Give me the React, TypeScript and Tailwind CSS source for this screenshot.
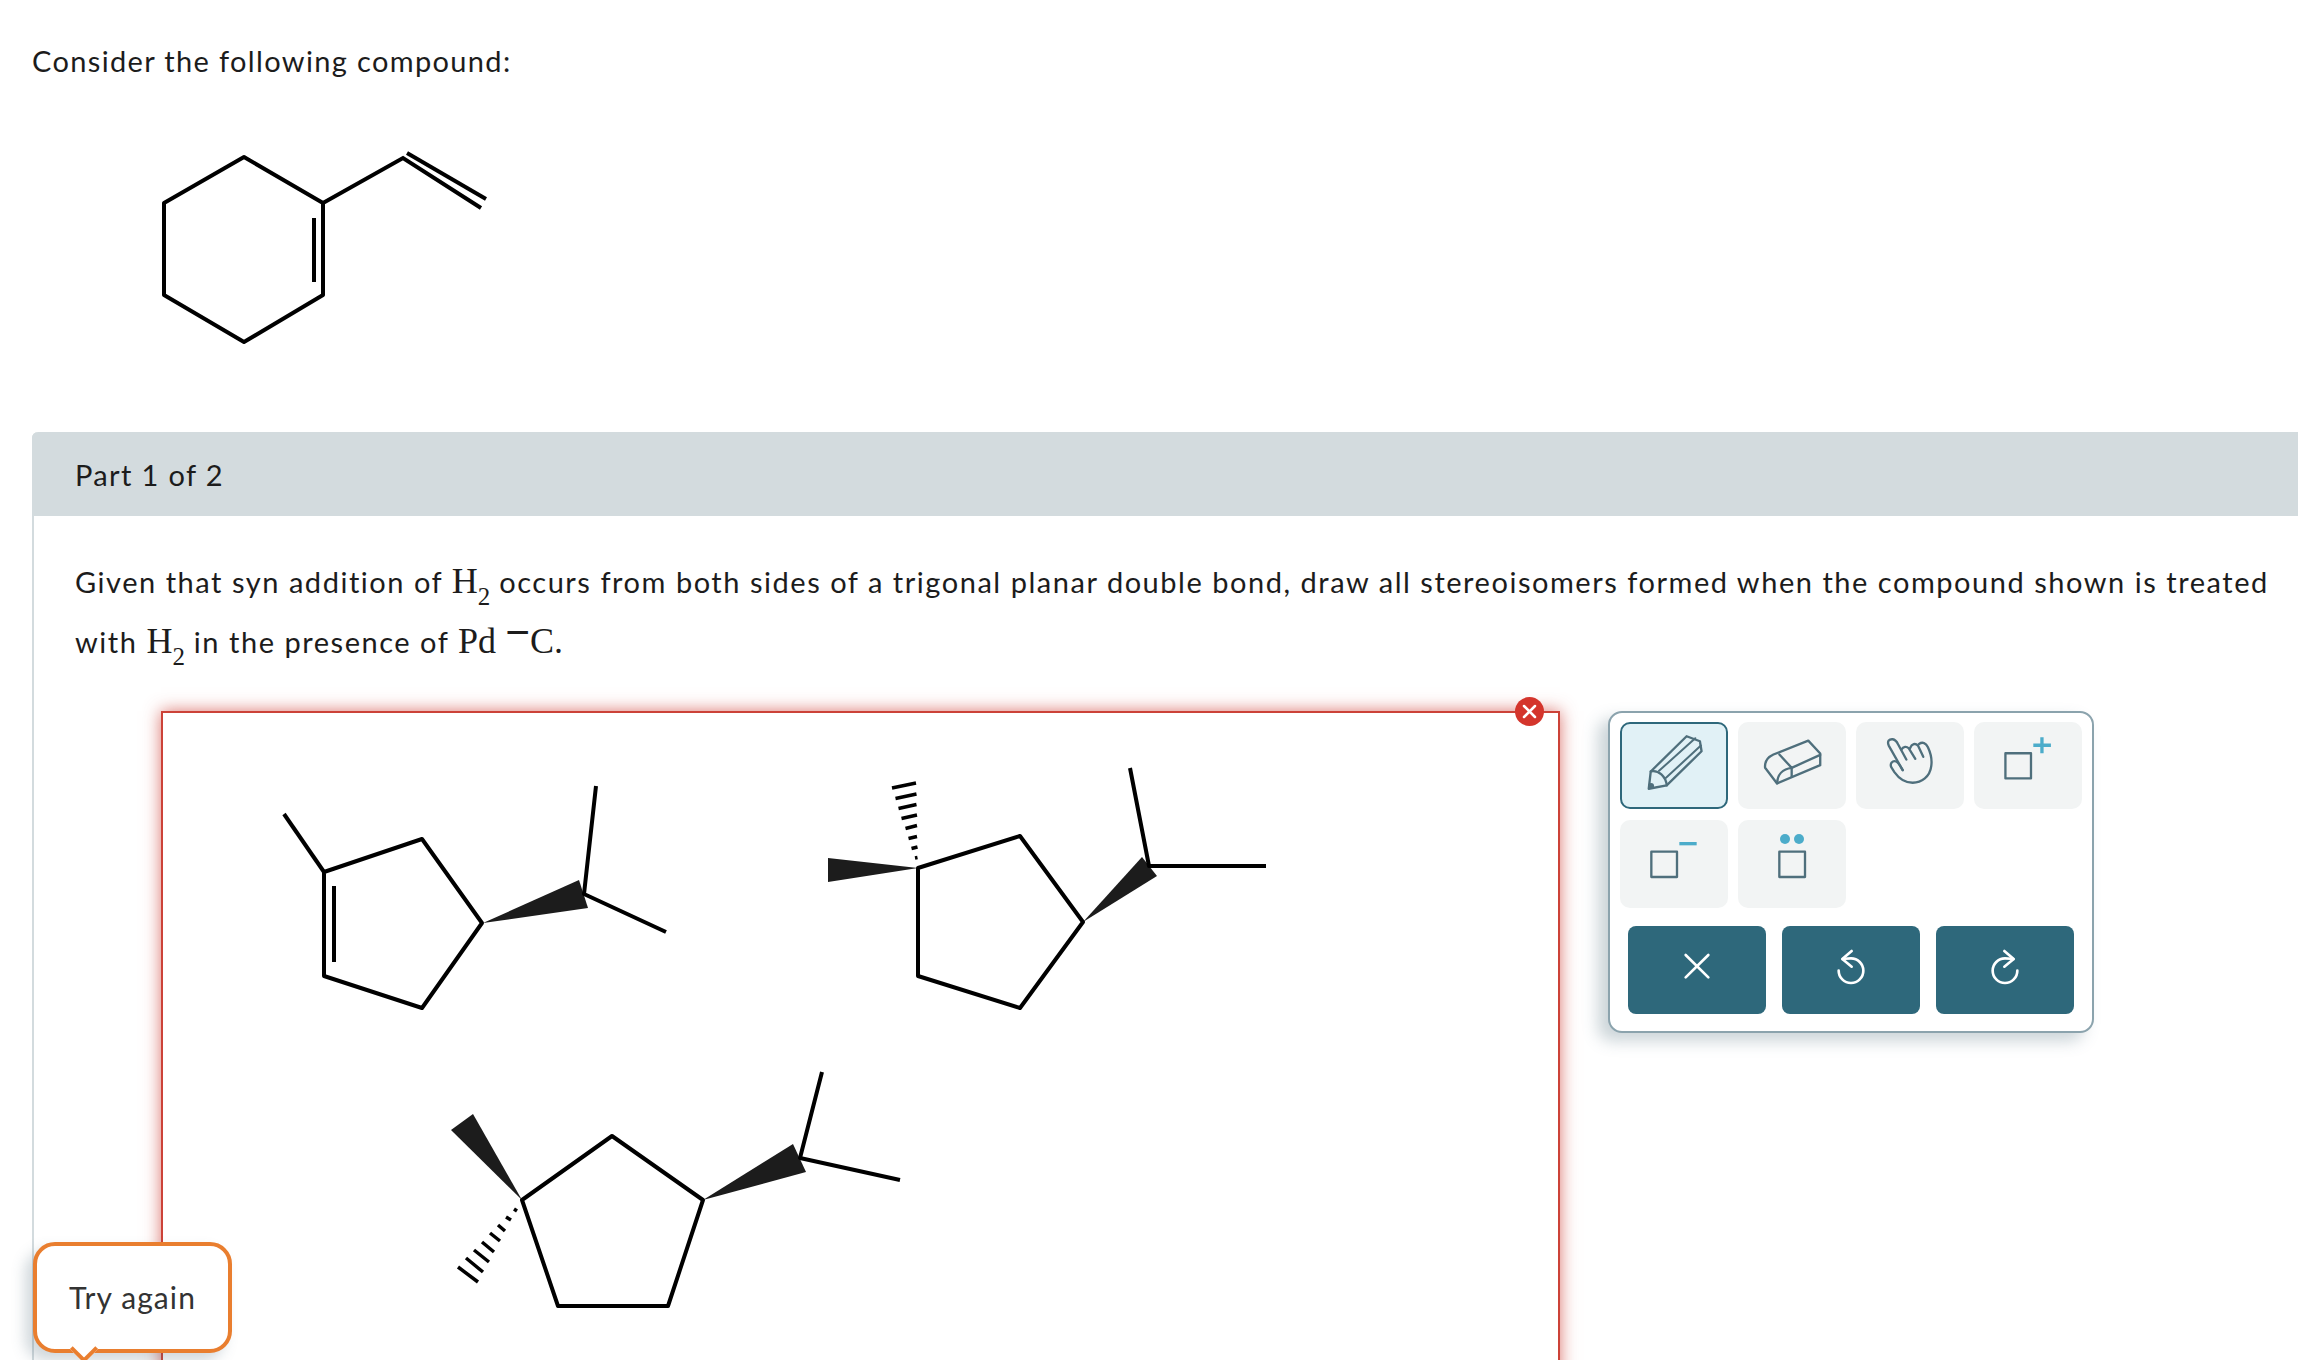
const serif = "font-['Liberation_Serif',serif]";

function Compound() {
  return (
    <svg width="380" height="230" viewBox="130 130 380 230" className="block" fill="none" stroke="#000" strokeWidth="4">
      <path d="M244 157L323 203V295L244 342L164 295V203Z" strokeLinejoin="round" />
      <path d="M314 218V282" />
      <path d="M323 203L403 158L481 208" />
      <path d="M407 153L486 199" />
    </svg>
  );
}

function Molecules() {
  return (
    <svg width="1395" height="660" viewBox="163 713 1395 660" className="block" fill="none" stroke="#000" strokeWidth="4" strokeLinejoin="round">
      <path d="M284 814L324 872" />
      <path d="M324 872L422 839L482 923L422 1008L324 976Z" />
      <path d="M334 886V962" />
      <path d="M483 923L579 880L588 908Z" fill="#1c1c1c" stroke="none" />
      <path d="M596 786L584 894L666 932" />

      <path d="M918 868L1020 836L1083 922L1020 1008L918 976Z" />
      <path d="M918 868L828 858V882Z" fill="#1c1c1c" stroke="none" />
      <path strokeWidth="3.500" d="M892 788L916 783M895.500 798.500L916.500 794M898.500 808.500L916.500 804.500M901.500 818.500L917 815M905.500 828.500L917 825.500M908.500 838.500L917 836.500M911.500 848.500L917.500 847M915 858L917.500 857.500" />
      <path d="M1083 922L1142 857L1157 876Z" fill="#1c1c1c" stroke="none" />
      <path d="M1130 768L1149 866H1266" />

      <path d="M522 1200L612 1136L703 1200L668 1306H558Z" />
      <path d="M522 1200L451 1130L473 1114Z" fill="#1c1c1c" stroke="none" />
      <path strokeWidth="3.500" d="M458 1267L478 1282M466 1258L483 1272M474 1250L489 1262M482 1242L494 1252M490 1233L500 1241M498 1225L505 1231M506 1217L511 1220M514 1209L517 1211" />
      <path d="M703 1200L793 1144L806 1172Z" fill="#1c1c1c" stroke="none" />
      <path d="M822 1072L800 1158L900 1180" />
    </svg>
  );
}

const ink = "#4f6f7c";
const accent = "#4cacca";

function ToolButton({ box, active, children }: { box: string; active?: boolean; children?: React.ReactNode }) {
  return (
    <div className={active ? "h-[87px] w-[108px] rounded-[10px] border-2 border-[#2e687b] bg-[#e1f1f6]" : "h-[87px] w-[108px] rounded-[10px] bg-[#f2f4f4]"}>
      <svg viewBox={box} className={active ? "-m-[2px] block h-[87px] w-[108px]" : "block h-[87px] w-[108px]"} fill="none" stroke={ink} strokeWidth="7" strokeLinejoin="round" strokeLinecap="round">
        {children}
      </svg>
    </div>
  );
}

function TallToolButton({ box, children }: { box: string; children?: React.ReactNode }) {
  return (
    <div className="h-[88px] w-[108px] rounded-[10px] bg-[#f2f4f4]">
      <svg viewBox={box} className="block h-[88px] w-[108px]" fill="none" stroke={ink} strokeWidth="7" strokeLinejoin="round" strokeLinecap="round">
        {children}
      </svg>
    </div>
  );
}

function ActionButton({ box, children }: { box: string; children: React.ReactNode }) {
  return (
    <div className="h-[88px] w-[138px] rounded-[8px] bg-[#2e687b]">
      <svg viewBox={box} className="block h-[88px] w-[138px]" fill="none" stroke="#fff" strokeWidth="8" strokeLinecap="round" strokeLinejoin="round">
        {children}
      </svg>
    </div>
  );
}

function Toolbar() {
  return (
    <div className="flex h-[322px] w-[486px] shrink-0 flex-col rounded-[14px] border-2 border-[#8ba3ad] bg-white pt-[9px] shadow-[-10px_8px_16px_rgba(70,100,115,0.28)]">
      <div className="flex gap-[10px] pl-[10px]">
        <ToolButton box="90 67 324 262" active>
          <path d="M176 268L182 216L290 110L330 125L335 155L230 258Z" />
          <path d="M182 216C205 210 228 232 230 258" />
          <path d="M207 214L316 116M228 235L333 138" strokeWidth="6" />
          <circle cx="183" cy="260" r="9" fill={ink} stroke="none" />
        </ToolButton>
        <ToolButton box="444 67 324 262">
          <path d="M525 205C523 185 535 172 550 165L655 123L691 162V197L561 252Z" />
          <path d="M568 165L605 205L691 166" />
          <path d="M605 205V232M605 205C578 208 562 226 561 252" />
        </ToolButton>
        <ToolButton box="798 67 324 262">
          <path d="M938 212L896 138C890 124 898 118 908 119C915 120 920 126 924 134L949 180" />
          <path d="M934 150C940 140 950 140 956 146L976 178" />
          <path d="M960 146C966 132 976 130 984 138L1000 172" />
          <path d="M987 133C998 126 1008 130 1014 143C1022 160 1027 180 1024 200C1020 232 995 250 968 250C945 250 925 235 913 218L904 204C898 192 908 182 918 186C924 188 930 198 938 212" />
        </ToolButton>
        <ToolButton box="1152 67 324 262">
          <rect x="1246" y="161" width="77" height="76" />
          <path d="M1330 137H1383M1356 113V161" stroke={accent} strokeWidth="10" strokeLinecap="butt" />
        </ToolButton>
      </div>
      <div className="mt-[11px] flex gap-[10px] pl-[10px]">
        <TallToolButton box="90 360 324 264">
          <rect x="184" y="455" width="77" height="76" />
          <path d="M268 431H320" stroke={accent} strokeWidth="10" strokeLinecap="butt" />
        </TallToolButton>
        <TallToolButton box="444 360 324 264">
          <rect x="568" y="455" width="77" height="76" />
          <circle cx="585" cy="417" r="15" fill={accent} stroke="none" />
          <circle cx="627" cy="417" r="15" fill={accent} stroke="none" />
        </TallToolButton>
      </div>
      <div className="mt-[18px] flex gap-[16px] pl-[18px]">
        <ActionButton box="114 678 414 264">
          <path d="M287 765L355 832M355 765L287 832" />
        </ActionButton>
        <ActionButton box="576 678 414 264">
          <path d="M746 812A37 37 0 1 0 783 775C775 775 768 776 758 777" />
          <path d="M785 753L757 777L785 800" />
        </ActionButton>
        <ActionButton box="1038 678 414 264">
          <path d="M1282 812A37 37 0 1 1 1245 775C1253 775 1260 776 1270 777" />
          <path d="M1243 753L1271 777L1243 800" />
        </ActionButton>
      </div>
    </div>
  );
}

function H2() {
  return (
    <span className={`${serif} text-[36px] leading-none tracking-normal`}>
      H<sub className="-bottom-[12px] text-[25px]">2</sub>
    </span>
  );
}

export default function App() {
  return (
    <div className="relative h-[1360px] w-[2298px] overflow-hidden bg-white font-['Lato',sans-serif] text-[29px] tracking-[1.35px] text-[#1c1c1c]">
      <p className="pl-[32px] pt-[41px] leading-[40px]">Consider the following compound:</p>
      <div className="mt-[49px] ml-[130px]">
        <Compound />
      </div>
      <div className="ml-[32px] mt-[72px] w-[2290px] rounded-tl-[6px] border-l-2 border-[#d3dbde]">
        <div className="-ml-[2px] flex h-[84px] items-center rounded-tl-[6px] bg-[#d3dbde] pl-[43px] pt-[1px]">Part 1 of 2</div>
        <div className="h-[155px] pl-[41px] pt-[36px] leading-[60px] tracking-[1.53px] whitespace-nowrap">
          Given that syn addition of <H2 /> occurs from both sides of a trigonal planar double bond, draw all stereoisomers formed when the compound shown is treated
          <br />
          with <H2 /> in the presence of <span className={`${serif} text-[36px] leading-none tracking-normal`}>Pd <span className="relative -top-[6px] text-[44px] font-bold leading-none">−</span><span>C</span>.</span>
        </div>
        <div className="ml-[127px] mt-[40px] flex items-start">
          <div className="relative h-[700px] w-[1399px] shrink-0 border-2 border-[#cc4238] bg-white shadow-[0_0_16px_rgba(204,59,48,0.7)]">
            <Molecules />
            <div className="absolute -top-[16px] right-[14px] flex h-[29px] w-[29px] items-center justify-center rounded-full bg-[#d4352c]">
              <svg width="15" height="15" viewBox="0 0 15 15" fill="none" stroke="#fff" strokeWidth="2.500" strokeLinecap="round">
                <path d="M2 2L13 13M13 2L2 13" />
              </svg>
            </div>
          </div>
          <div className="ml-[48px]">
            <Toolbar />
          </div>
        </div>
      </div>
      <div className="absolute left-[33px] top-[1242px] flex h-[111px] w-[199px] items-center justify-center rounded-[22px] border-4 border-[#e97e2f] bg-white font-['Lato',sans-serif] text-[30px] tracking-[1.1px] text-[#333] shadow-[-8px_8px_14px_rgba(70,100,115,0.25)]">
        Try again
        <div className="absolute bottom-[-10px] left-[37px] h-[20px] w-[20px] rotate-45 border-b-4 border-r-4 border-[#e97e2f] bg-white" />
      </div>
    </div>
  );
}
